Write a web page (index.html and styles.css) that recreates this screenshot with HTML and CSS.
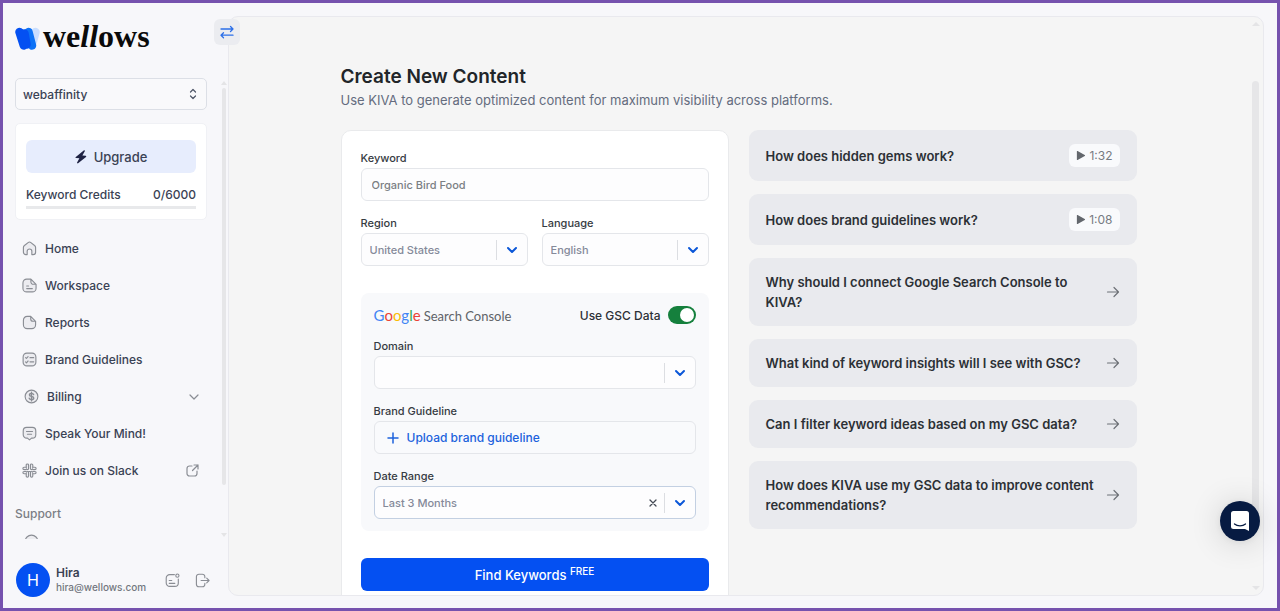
FILE: index.html
```html
<!DOCTYPE html>
<html lang="en">
<head>
    <meta charset="UTF-8">
    <meta name="viewport" content="width=device-width, initial-scale=1.0">
    <title>Wellows - Create New Content</title>
    <link rel="stylesheet" href="styles.css">
</head>
<body>
    <svg class="sprite" aria-hidden="true">
        <symbol id="chevron" viewBox="0 0 12 12"><path d="M2 4l4 4 4-4" fill="none" stroke="currentColor" stroke-width="2" stroke-linecap="round" stroke-linejoin="round"/></symbol>
        <symbol id="arrow" viewBox="0 0 14 14"><path d="M1.500 7h11M8 2.500L12.500 7 8 11.500" fill="none" stroke="currentColor" stroke-width="1.200" stroke-linecap="round" stroke-linejoin="round"/></symbol>
        <symbol id="play" viewBox="0 0 10 12"><path d="M0.500 1.500v9c0 .5.4.6.8.4l7.800-4.300c.5-.3.5-.9 0-1.200L1.300 1.100c-.4-.2-.8-.1-.8.4z" fill="currentColor"/></symbol>
    </svg>

    <div class="app">
        <aside class="sidebar">
            <a class="logo" href="#">
                <svg width="26" height="24" viewBox="0 0 26 24" fill="none" stroke-width="8.500" stroke-linecap="round" aria-hidden="true">
                    <path d="M20.500 5L18 14" stroke="#c9deff"/>
                    <path d="M13.500 5L17 18.500" stroke="#0d72f6"/>
                    <path d="M4.500 5L8.800 18.500M9.500 6.500L11.500 17.500" stroke="#0450f2"/>
                </svg>
                <span class="logo-text">we<i>ll</i>ows</span>
            </a>

            <div class="sidebar-scroll">
                <div class="sidebar-body">
                    <button class="project-select" type="button">
                        webaffinity
                        <svg width="8" height="12" viewBox="0 0 8 12" fill="none" stroke="#4d5566" stroke-width="1.200" stroke-linecap="round" stroke-linejoin="round"><path d="M1.500 4L4 1.500 6.500 4M1.500 8L4 10.500 6.500 8"/></svg>
                    </button>

                    <div class="credits">
                        <button class="upgrade" type="button">
                            <svg width="12" height="14" viewBox="0 0 12 14"><path d="M8.700.5L.8 6.900c-.5.500-.3 1 .3 1.100l3.300.3-2.300 4.200c-.3.700.4 1.200 1 .8l7.900-6.400c.5-.5.3-1-.3-1.100l-3.300-.3L9.800 1.300C10.100.6 9.300.1 8.700.5z" fill="#1f2344"/></svg>
                            Upgrade
                        </button>
                        <div class="credits-row">
                            <span>Keyword Credits</span>
                            <span>0/6000</span>
                        </div>
                        <div class="credits-bar"></div>
                    </div>

                    <nav class="menu">
                        <a href="#">
                            <svg class="icon" viewBox="0 0 16 16"><path d="M1.500 6.900c0-.8.400-1.600 1.100-2.100L6.500 1.700c.9-.7 2.100-.7 3 0l3.900 3.100c.7.5 1.100 1.300 1.100 2.100V12c0 1.400-1.100 2.500-2.500 2.500h-1.500V10.800C10.500 9.500 9.400 8.500 8 8.500s-2.500 1-2.500 2.300v3.700H4A2.500 2.500 0 0 1 1.500 12z"/></svg>
                            Home
                        </a>
                        <a href="#">
                            <svg class="icon" viewBox="0 0 16 16"><path d="M9.500 1.200H5A4 4 0 0 0 1 5.200v5.600a4 4 0 0 0 4 4h6a4 4 0 0 0 4-4V6.700zM9.500 1.200v3a2.500 2.500 0 0 0 2.500 2.500h3M5 8.500h2M5 11.300h6"/></svg>
                            Workspace
                        </a>
                        <a href="#">
                            <svg class="icon" viewBox="0 0 16 16"><path d="M9.300 1.500H5.500a4 4 0 0 0-4 4v5a4 4 0 0 0 4 4h5a4 4 0 0 0 4-4V6.700zM9.300 1.500v2.700a2.500 2.500 0 0 0 2.500 2.500h2.700"/></svg>
                            Reports
                        </a>
                        <a href="#">
                            <svg class="icon" viewBox="0 0 16 16"><rect x="1.200" y="1.200" width="13.600" height="13.600" rx="4"/><path d="M3.800 6l.9.900L6.500 5M3.800 10.600l.9.900 1.800-1.900M8.500 6h4M8.500 10.500h4"/></svg>
                            Brand Guidelines
                        </a>
                        <a class="wide" href="#">
                            <svg class="icon" viewBox="0 0 16 16"><circle cx="8" cy="8" r="6.800"/><path stroke-width="1.500" d="M10.300 6C10 5 9 4.700 8 4.700c-1.200 0-2.200.5-2.200 1.600C5.800 8.700 10.400 7 10.400 9.600c0 1.200-1.100 1.700-2.400 1.700-1.200 0-2.300-.5-2.500-1.500M8 3.300v9.400"/></svg>
                            Billing
                            <svg class="end" width="10" height="10" viewBox="0 0 10 10"><path d="M1 3l4 4 4-4"/></svg>
                        </a>
                        <a href="#">
                            <svg class="icon" viewBox="0 0 16 16"><path d="M5 1.500h6a3.700 3.700 0 0 1 3.700 3.700v4A3.700 3.700 0 0 1 11 12.900h-.8L8 14.800l-2.200-1.900H5a3.700 3.700 0 0 1-3.700-3.700v-4A3.700 3.700 0 0 1 5 1.500zM4.800 5.800h6.400M5.800 8.800h4.400"/></svg>
                            Speak Your Mind!
                        </a>
                        <a href="#">
                            <svg class="icon" viewBox="0 0 16 16"><rect x="4.500" y="1" width="2.500" height="6" rx="1.200"/><rect x="9" y="1" width="2.500" height="6" rx="1.200"/><rect x="9" y="9" width="2.500" height="6" rx="1.200"/><rect x="4.500" y="9" width="2.500" height="6" rx="1.200"/><path d="M4.500 4.500H2.200a1.200 1.200 0 0 0 0 2.500h2.300M11.500 4.500h2.300a1.200 1.200 0 0 1 0 2.500h-2.300M4.500 9H2.200a1.200 1.200 0 0 0 0 2.500h2.300M11.500 9h2.300a1.200 1.200 0 0 1 0 2.500h-2.300M7 9h2"/></svg>
                            Join us on Slack
                            <svg class="end" width="13" height="13" viewBox="0 0 13 13"><path d="M6 2H3.500A2.500 2.500 0 0 0 1 4.500v5A2.500 2.500 0 0 0 3.500 12h5A2.500 2.500 0 0 0 11 9.500V7M8 1h4v4M12 1L6.500 6.500"/></svg>
                        </a>
                    </nav>

                    <p class="menu-title">Support</p>
                    <nav class="menu">
                        <a class="wide" href="#" aria-label="Help">
                            <svg class="icon" viewBox="0 0 16 16"><circle cx="8" cy="8" r="6.800"/></svg>
                        </a>
                    </nav>
                </div>
                <div class="scrollbar">
                    <span class="scroll-up"></span>
                    <span class="scroll-thumb"></span>
                    <span class="scroll-down"></span>
                </div>
            </div>

            <div class="user">
                <span class="avatar">H</span>
                <div class="user-info">
                    <strong>Hira</strong>
                    <span>hira@wellows.com</span>
                </div>
                <button type="button" aria-label="What's new">
                    <svg class="icon" viewBox="0 0 16 16"><path d="M10 1.700H5a3.700 3.700 0 0 0-3.700 3.700v5.200A3.700 3.700 0 0 0 5 14.300h5.500a3.700 3.700 0 0 0 3.700-3.700V6.500M4.500 8h2.700M4.500 11h6"/><circle cx="13.200" cy="2.800" r="1.700"/></svg>
                </button>
                <button type="button" aria-label="Log out">
                    <svg class="icon" viewBox="0 0 16 16"><path d="M10.500 5V4a2.700 2.700 0 0 0-2.700-2.700H4.200A2.700 2.700 0 0 0 1.500 4v8a2.700 2.700 0 0 0 2.700 2.700h3.600A2.700 2.700 0 0 0 10.500 12v-1M6.500 8h8.500M12.500 5.500L15 8l-2.500 2.500"/></svg>
                </button>
            </div>

            <button class="toggle" type="button" aria-label="Collapse sidebar">
                <svg width="14" height="14" viewBox="0 0 14 14" fill="none" stroke="#2c6fe8" stroke-width="1.300" stroke-linecap="round" stroke-linejoin="round"><path d="M1 4h12M10.500 1.500L13 4l-2.500 2.500M13 10.200H1M3.500 7.700L1 10.200l2.500 2.500"/></svg>
            </button>
        </aside>

        <main class="panel">
            <div class="panel-body">
                <div class="content">
                    <h1>Create New Content</h1>
                    <p class="subtitle">Use KIVA to generate optimized content for maximum visibility across platforms.</p>

                    <div class="columns">
                        <form class="card">
                            <div class="field">
                                <label for="keyword">Keyword</label>
                                <input class="control" type="text" id="keyword" placeholder="Organic Bird Food">
                            </div>

                            <div class="field-row">
                                <div class="field">
                                    <label for="region">Region</label>
                                    <div class="control dropdown">
                                        <select id="region"><option>United States</option></select>
                                        <svg class="chevron"><use href="#chevron"/></svg>
                                    </div>
                                </div>
                                <div class="field">
                                    <label for="language">Language</label>
                                    <div class="control dropdown">
                                        <select id="language"><option>English</option></select>
                                        <svg class="chevron"><use href="#chevron"/></svg>
                                    </div>
                                </div>
                            </div>

                            <section class="gsc">
                                <div class="gsc-head">
                                    <div class="gsc-logo">
                                        <span class="google"><span class="blue">G</span><span class="red">o</span><span class="yellow">o</span><span class="blue">g</span><span class="green">l</span><span class="red">e</span></span>
                                        <span>Search Console</span>
                                    </div>
                                    <label class="switch">
                                        Use GSC Data
                                        <input type="checkbox" checked>
                                    </label>
                                </div>

                                <div class="field">
                                    <label for="domain">Domain</label>
                                    <div class="control dropdown">
                                        <select id="domain"><option></option></select>
                                        <svg class="chevron"><use href="#chevron"/></svg>
                                    </div>
                                </div>

                                <div class="field">
                                    <label for="guideline">Brand Guideline</label>
                                    <button class="control upload" type="button" id="guideline">
                                        <svg width="12" height="12" viewBox="0 0 12 12" stroke="currentColor" stroke-width="1.500" stroke-linecap="round"><path d="M6 1v10M1 6h10"/></svg>
                                        Upload brand guideline
                                    </button>
                                </div>

                                <div class="field">
                                    <label for="range">Date Range</label>
                                    <div class="control dropdown active">
                                        <select id="range"><option>Last 3 Months</option></select>
                                        <button class="clear" type="button" aria-label="Clear date range">
                                            <svg width="8" height="8" viewBox="0 0 8 8" stroke="#444a55" stroke-width="1.300" stroke-linecap="round"><path d="M1 1l6 6M7 1L1 7"/></svg>
                                        </button>
                                        <svg class="chevron"><use href="#chevron"/></svg>
                                    </div>
                                </div>
                            </section>

                            <button class="submit" type="submit">Find Keywords <sup>FREE</sup></button>
                        </form>

                        <div class="faq">
                            <button type="button">How does hidden gems work? <span class="time"><svg><use href="#play"/></svg>1:32</span></button>
                            <button type="button">How does brand guidelines work? <span class="time"><svg><use href="#play"/></svg>1:08</span></button>
                            <button type="button"><span>Why should I connect Google Search Console to KIVA?</span> <svg class="arrow"><use href="#arrow"/></svg></button>
                            <button type="button"><span>What kind of keyword insights will I see with GSC?</span> <svg class="arrow"><use href="#arrow"/></svg></button>
                            <button type="button"><span>Can I filter keyword ideas based on my GSC data?</span> <svg class="arrow"><use href="#arrow"/></svg></button>
                            <button type="button"><span>How does KIVA use my GSC data to improve content recommendations?</span> <svg class="arrow"><use href="#arrow"/></svg></button>
                        </div>
                    </div>
                </div>
            </div>
            <div class="scrollbar large">
                <span class="scroll-up"></span>
                <span class="scroll-thumb"></span>
                <span class="scroll-down"></span>
            </div>
        </main>

        <button class="chat" type="button" aria-label="Open chat">
            <svg width="18" height="20" viewBox="0 0 18 20"><path d="M2.500 0h13A2.500 2.500 0 0 1 18 2.500V20l-4-2H2.500A2.500 2.500 0 0 1 0 15.500v-13A2.500 2.500 0 0 1 2.500 0z" fill="#fff"/><path d="M3.500 13c3 2.500 8 2.500 11 0" fill="none" stroke="#071b42" stroke-width="1.300" stroke-linecap="round"/></svg>
        </button>
    </div>
</body>
</html>
```

FILE: styles.css
```css
* {
    box-sizing: border-box;
}
body {
    margin: 0;
    font-family: Inter, "Liberation Sans", sans-serif;
    font-size: 12px;
    color: #3a4254;
}
button, input, select {
    font: inherit;
    color: inherit;
    margin: 0;
}
button {
    cursor: pointer;
}
a {
    color: inherit;
    text-decoration: none;
}
.sprite {
    display: none;
}
.app {
    position: relative;
    display: flex;
    height: 100vh;
    border: 3px solid #7652ae;
    background: #f7f7fa;
    overflow: hidden;
}

/* sidebar */
.sidebar {
    position: relative;
    display: flex;
    flex-direction: column;
    flex: 0 0 225px;
}
.logo {
    display: flex;
    align-items: center;
    gap: 2px;
    height: 75px;
    padding: 0 12px 3px;
}
.logo-text {
    font-family: "Liberation Serif", serif;
    font-size: 32px;
    line-height: 32px;
    font-weight: bold;
    color: #0a0a0a;
    padding-bottom: 6px;
}
.sidebar-scroll {
    display: flex;
    flex: 1;
    min-height: 0;
    overflow: hidden;
}
.sidebar-body {
    flex: 1;
    padding: 0 12px;
}
.project-select {
    display: flex;
    align-items: center;
    justify-content: space-between;
    width: 100%;
    height: 32px;
    padding: 0 9px 0 7px;
    border: 1px solid #dcdfe6;
    border-radius: 5px;
    background: #f9f9fb;
    font-weight: 500;
}
.credits {
    margin-top: 13px;
    padding: 16px 10px 10px;
    border: 1px solid #f0f1f5;
    border-radius: 5px;
    background: #fff;
}
.upgrade {
    display: flex;
    align-items: center;
    justify-content: center;
    gap: 7px;
    width: 100%;
    height: 33px;
    border: 0;
    border-radius: 6px;
    background: #e7edfd;
    font-size: 13px;
    font-weight: 500;
}
.credits-row {
    display: flex;
    justify-content: space-between;
    margin-top: 13px;
    line-height: 18px;
    font-weight: 500;
}
.credits-bar {
    height: 3px;
    margin-top: 2px;
    background: #e8e9eb;
}
.menu {
    margin-top: 10px;
}
.menu a {
    display: flex;
    align-items: center;
    gap: 8px;
    height: 37px;
    padding: 0 8px 0 7px;
    font-weight: 500;
}
.menu a.wide {
    padding-left: 9px;
}
.icon, .end {
    fill: none;
    stroke: #8a8d94;
    stroke-width: 1.2;
    stroke-linecap: round;
    stroke-linejoin: round;
}
.icon {
    width: 15px;
    height: 15px;
}
.menu .icon {
    fill: #ececf0;
}
.end {
    margin-left: auto;
}
.menu-title {
    margin: 16px 0 0;
    line-height: 18px;
    color: #7b7e85;
    font-weight: 500;
}
.menu-title + .menu {
    margin-top: 0;
}
.user {
    display: flex;
    align-items: center;
    padding: 24px 18px 11px 13px;
}
.avatar {
    display: flex;
    align-items: center;
    justify-content: center;
    width: 34px;
    height: 34px;
    border-radius: 50%;
    background: #0450f2;
    color: #fff;
    font-size: 16px;
}
.user-info {
    display: flex;
    flex-direction: column;
    flex: 1;
    padding-left: 6px;
    line-height: 15px;
}
.user-info strong {
    font-size: 12px;
    font-weight: 600;
}
.user-info span {
    font-size: 10px;
    font-weight: 500;
    color: #73777f;
}
.user button {
    display: flex;
    margin-left: 15px;
    padding: 0;
    border: 0;
    background: none;
}
.toggle {
    position: absolute;
    top: 16px;
    right: -12px;
    display: flex;
    align-items: center;
    justify-content: center;
    width: 26px;
    height: 26px;
    padding: 0;
    border: 0;
    border-radius: 6px;
    background: #ebecf0;
}

/* scrollbars */
.scrollbar {
    display: flex;
    flex-direction: column;
    align-items: center;
    width: 9px;
    padding: 3px 0 2px;
}
.scroll-up, .scroll-down {
    border: 3px solid transparent;
}
.scroll-up {
    border-top: 0;
    border-bottom: 4px solid #e4e4e6;
}
.scroll-down {
    margin-top: auto;
    border-bottom: 0;
    border-top: 4px solid #e4e4e6;
}
.scroll-thumb {
    width: 4px;
    height: 87%;
    margin-top: 3px;
    border-radius: 4px;
    background: #e6e6e8;
}
.scrollbar.large {
    width: 15px;
    padding: 5px 0;
}
.large .scroll-up, .large .scroll-down {
    border-left-width: 4px;
    border-right-width: 4px;
}
.large .scroll-thumb {
    width: 7px;
    height: 78%;
    margin-top: 55px;
}

/* main panel */
.panel {
    display: flex;
    flex: 1;
    margin: 13px 13px 12px 0;
    border: 1px solid #e9e9ee;
    border-radius: 10px;
    background: #f5f5f5;
    overflow: hidden;
}
.panel-body {
    flex: 1;
    padding: 48px 20px 0;
}
.content {
    max-width: 796px;
    margin: 0 auto;
}
h1 {
    margin: 0;
    font-size: 19px;
    line-height: 24px;
    font-weight: 600;
    color: #212529;
}
.subtitle {
    margin: 1px 0 20px;
    font-size: 13px;
    line-height: 20px;
    color: #646c7e;
}
.columns {
    display: grid;
    grid-template-columns: 1fr 1fr;
    gap: 20px;
    align-items: start;
}
.card {
    padding: 19px;
    border: 1px solid #e9eaec;
    border-radius: 10px;
    background: #fff;
}
.field {
    display: flex;
    flex-direction: column;
    gap: 2px;
    margin-bottom: 14px;
}
.field label {
    font-size: 11px;
    line-height: 16px;
    font-weight: 500;
    color: #363b42;
}
.field-row {
    display: grid;
    grid-template-columns: 1fr 1fr;
    gap: 14px;
}
.control {
    width: 100%;
    height: 33px;
    padding: 0 10px;
    border: 1px solid #e4e6ea;
    border-radius: 6px;
    background: #fdfdfe;
    font-size: 11px;
    font-weight: 500;
}
.control::placeholder {
    color: #7b7f84;
    opacity: 1;
}
.dropdown {
    display: flex;
    align-items: center;
    padding: 0 9px 0 8px;
}
.dropdown select {
    flex: 1;
    min-width: 0;
    padding: 0;
    border: 0;
    background: none;
    appearance: none;
    color: #858a9a;
    outline: none;
}
.dropdown.active {
    border-color: #c3d0e2;
}
.chevron {
    box-sizing: content-box;
    width: 12px;
    height: 12px;
    padding: 4px 0 4px 9px;
    border-left: 1px solid #dcdee2;
    color: #0b57d8;
}
.clear {
    display: flex;
    margin-right: 7px;
    padding: 0;
    border: 0;
    background: none;
}
.gsc {
    margin: 13px 0 27px;
    padding: 12px 13px;
    border-radius: 8px;
    background: #f8f9fb;
}
.gsc .field:last-child {
    margin-bottom: 0;
}
.gsc-head {
    display: flex;
    align-items: center;
    justify-content: space-between;
    height: 20px;
    margin-bottom: 13px;
}
.gsc-logo {
    display: flex;
    align-items: baseline;
    gap: 3px;
    font-family: Lato, sans-serif;
    font-size: 13px;
    color: #5f6368;
}
.google {
    font-size: 15px;
}
.blue { color: #4285f4; }
.red { color: #ea4335; }
.yellow { color: #fbbc05; }
.green { color: #34a853; }
.switch {
    display: flex;
    align-items: center;
    gap: 7px;
    font-weight: 500;
    color: #2c3036;
}
.switch input {
    display: flex;
    width: 28px;
    height: 18px;
    padding: 2px;
    border-radius: 9px;
    background: #15803d;
    appearance: none;
}
.switch input::before {
    content: "";
    width: 14px;
    height: 14px;
    margin-left: auto;
    border-radius: 50%;
    background: #fff;
}
.upload {
    display: flex;
    align-items: center;
    gap: 8px;
    padding: 0 12px;
    background: #f9fafc;
    color: #1c62dc;
    font-size: 12px;
}
.submit {
    width: 100%;
    height: 33px;
    border: 0;
    border-radius: 6px;
    background: #0450f2;
    color: #fff;
    font-size: 13px;
    font-weight: 500;
}
.submit sup {
    font-size: 10px;
    line-height: 0;
}

/* faq */
.faq {
    display: flex;
    flex-direction: column;
    gap: 13px;
}
.faq button {
    display: flex;
    align-items: center;
    justify-content: space-between;
    padding: 14px 17px;
    border: 0;
    border-radius: 9px;
    background: #e9eaee;
    color: #2c3035;
    font-size: 13px;
    line-height: 20px;
    font-weight: 600;
    text-align: left;
}
.time {
    display: flex;
    align-items: center;
    gap: 3px;
    height: 23px;
    padding: 0 7px;
    border-radius: 6px;
    background: #f9fafc;
    color: #777b82;
    font-size: 12px;
    font-weight: 400;
}
.time svg {
    width: 10px;
    height: 11px;
    color: #63676d;
}
.arrow {
    flex: none;
    width: 14px;
    height: 14px;
    color: #6d7176;
}
.chat {
    position: absolute;
    right: 17px;
    bottom: 67px;
    display: flex;
    align-items: center;
    justify-content: center;
    width: 40px;
    height: 40px;
    padding: 0;
    border: 0;
    border-radius: 50%;
    background: #071b42;
    box-shadow: 0 1px 6px rgba(0, 0, 0, 0.06), 0 2px 32px rgba(0, 0, 0, 0.16);
}
```
